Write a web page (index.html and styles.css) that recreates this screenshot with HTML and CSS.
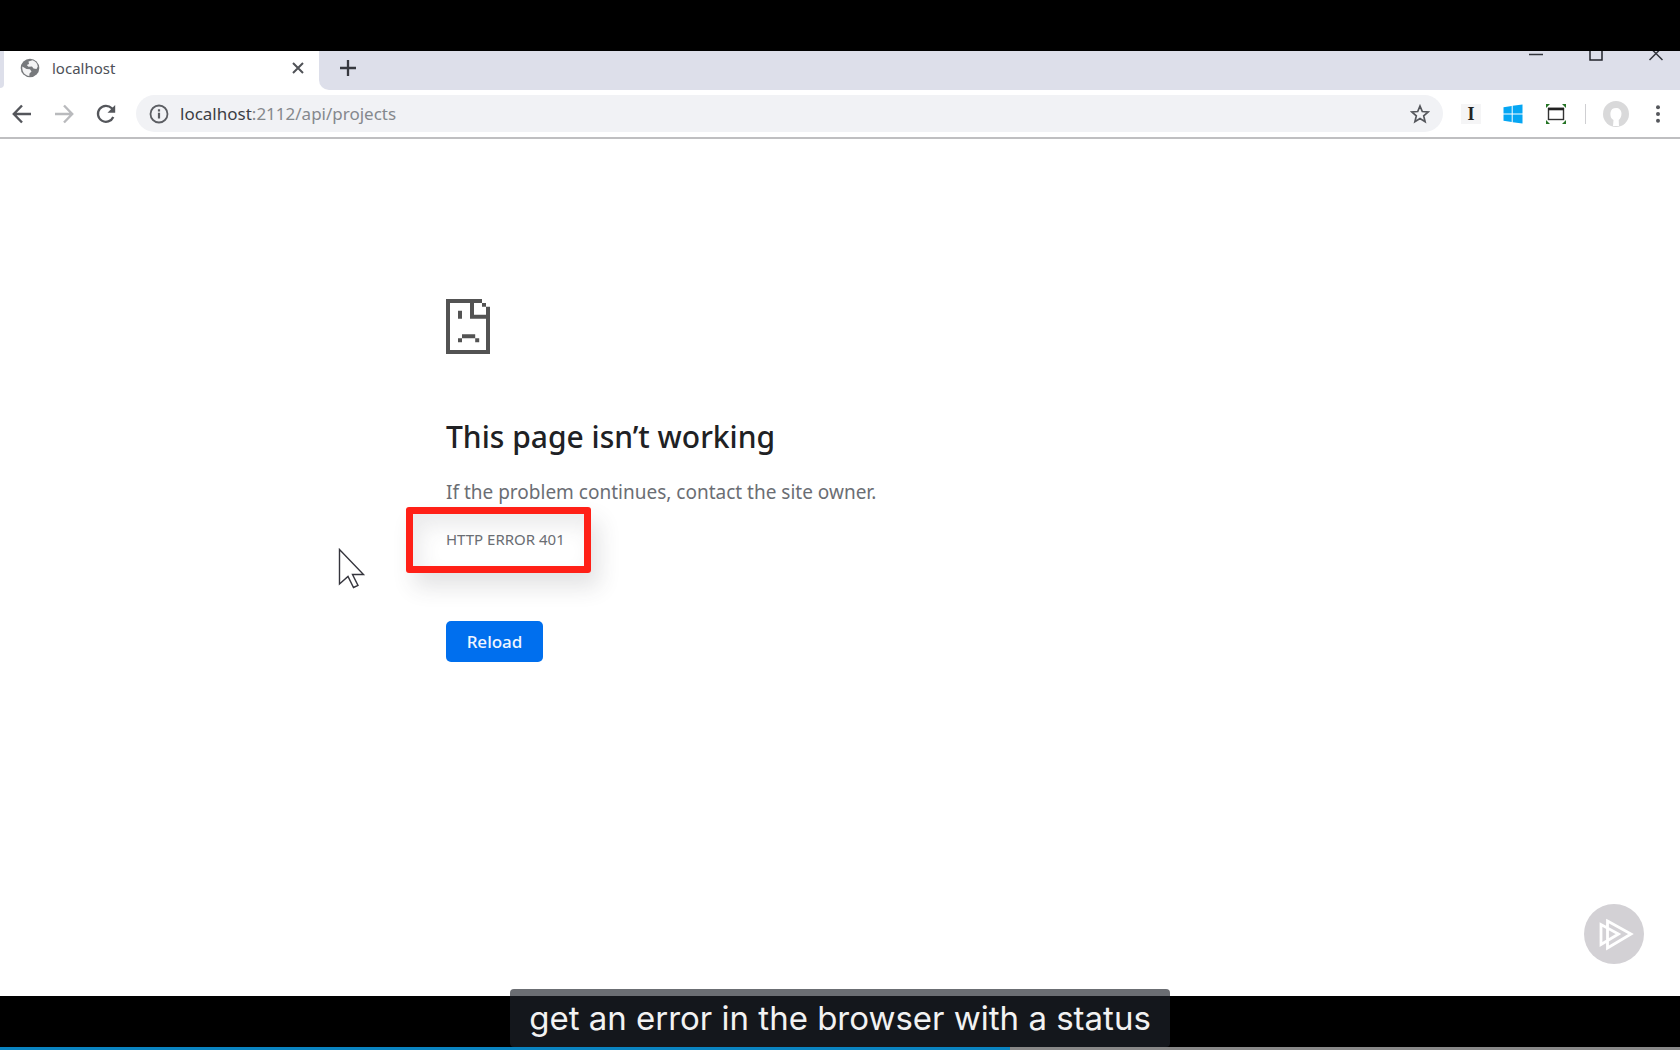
FILE: index.html
```html
<!DOCTYPE html>
<html lang="en">
<head>
<meta charset="utf-8">
<title>localhost</title>
<link rel="stylesheet" href="styles.css">
</head>
<body>
<div class="player">
  <div class="browser">
    <header class="tabstrip">
      <div class="tab-previous"></div>
      <div class="tab">
        <svg class="globe" viewBox="0 0 20 20" width="20" height="20" aria-hidden="true">
          <circle cx="10" cy="10" r="9.3" fill="#77797c"/>
          <path d="M2.300 8.500 6.500 11 10 11.300 11.500 13.500 9.500 15.500 9.300 18C5 17.500 1.800 14 2.300 8.500ZM8.500 3.500 12.500 2.300C15.500 3.300 17.300 5.500 17.800 8.500L16.500 11 13.500 10.500 12 8.500 8.500 8.800 6.800 7 9 6Z" fill="#f4f4f5"/>
        </svg>
        <span class="tab-title">localhost</span>
        <button class="icon-button" type="button" aria-label="Close tab">
          <svg viewBox="0 0 12 12" width="12" height="12"><path d="M1 1 11 11M11 1 1 11" stroke="#505257" stroke-width="2"/></svg>
        </button>
      </div>
      <button class="icon-button new-tab" type="button" aria-label="New tab">
        <svg viewBox="0 0 16 16" width="16" height="16"><path d="M8 0V16M0 8H16" stroke="#36383f" stroke-width="2.300"/></svg>
      </button>
      <div class="window-controls">
        <button class="icon-button" type="button" aria-label="Minimize"><svg viewBox="0 0 14 14" width="14" height="14"><path d="M0 7.500H14" stroke="#33353c" stroke-width="1.500"/></svg></button>
        <button class="icon-button" type="button" aria-label="Maximize"><svg viewBox="0 0 14 14" width="14" height="14"><path d="M1 0H13V13H1Z" fill="none" stroke="#22242b" stroke-width="1.500"/></svg></button>
        <button class="icon-button" type="button" aria-label="Close"><svg viewBox="0 0 14 14" width="14" height="14"><path d="M.5 0 13.500 13M13.500 0 .5 13" stroke="#33353c" stroke-width="1.500"/></svg></button>
      </div>
    </header>
    <nav class="toolbar">
      <div class="nav-buttons">
        <button class="icon-button" type="button" aria-label="Back"><svg viewBox="0 0 20 20" width="20" height="20"><path d="M19 10H3M10 1.500 1.800 10 10 18.500" fill="none" stroke="#54565b" stroke-width="2.400"/></svg></button>
        <button class="icon-button" type="button" aria-label="Forward"><svg viewBox="0 0 20 20" width="20" height="20"><path d="M1 10H17M10 1.500 18.200 10 10 18.500" fill="none" stroke="#b9babd" stroke-width="2.400"/></svg></button>
        <button class="icon-button" type="button" aria-label="Reload page"><svg viewBox="0 0 20 20" width="20" height="20"><path d="M17.300 13A8 8 0 1 1 15.800 4.300L17 5.600" fill="none" stroke="#54565b" stroke-width="2.300"/><path d="M19.200 1V8.800H11.500Z" fill="#54565b"/></svg></button>
      </div>
      <div class="address">
        <svg viewBox="0 0 20 20" width="20" height="20" aria-hidden="true"><circle cx="10" cy="10" r="8.500" fill="none" stroke="#5c5e63" stroke-width="1.800"/><path d="M10 8.800V14.500M10 5.300V7.400" stroke="#5c5e63" stroke-width="2.200"/></svg>
        <span class="url"><span class="host">localhost</span>:2112/api/projects</span>
        <button class="icon-button" type="button" aria-label="Bookmark this page"><svg viewBox="0 0 20 20" width="20" height="20"><path d="M10 2 12.300 7.500 18.200 8 13.700 11.900 15.100 17.700 10 14.600 4.900 17.700 6.300 11.900 1.800 8 7.700 7.500Z" fill="none" stroke="#55575c" stroke-width="1.700"/></svg></button>
      </div>
      <div class="extensions">
        <button class="icon-button" type="button" aria-label="Instapaper"><span class="instapaper">I</span></button>
        <button class="icon-button" type="button" aria-label="Windows extension"><svg viewBox="0 0 20 20" width="20" height="20"><path d="M.5 3.200 8.700 2V9.500H.5ZM9.700 1.800 19.500.4V9.500H9.700ZM.5 10.500H8.700V18L.5 16.800ZM9.700 10.500H19.500V19.600L9.700 18.200Z" fill="#05a6f3"/></svg></button>
        <button class="icon-button" type="button" aria-label="Full page capture"><svg viewBox="0 0 22 20" width="22" height="20"><rect x="3.500" y="4.500" width="15" height="11" fill="#fff" stroke="#333" stroke-width="1.400"/><path d="M3 5H19" stroke="#222" stroke-width="2.600"/><path d="M1 0H5L1 4ZM17 0H21V4ZM1 16V20H5ZM21 16V20H17Z" fill="#247324"/></svg></button>
        <span class="divider"></span>
        <button class="icon-button profile" type="button" aria-label="Profile"><svg viewBox="0 0 26 26" width="26" height="26"><circle cx="13" cy="13" r="13" fill="#d9d9da"/><path d="M10 25 10.500 19C7.500 17.500 7.200 14 7.500 11.500C8 8.300 10 7 13 7S18.500 9 18.500 12.500C18.500 15.800 17.200 18 15.700 19L16 25Z" fill="#fff"/></svg></button>
        <button class="icon-button" type="button" aria-label="Menu"><svg viewBox="0 0 4 18" width="4" height="18"><g fill="#55575c"><circle cx="2" cy="2.200" r="2"/><circle cx="2" cy="9" r="2"/><circle cx="2" cy="15.800" r="2"/></g></svg></button>
      </div>
    </nav>
    <main class="page">
      <div class="error">
        <svg class="sad-file" viewBox="0 0 11 14" width="44" height="55" preserveAspectRatio="none" aria-hidden="true"><path d="M0 0H9V1H7V4H10V2H11V14H0ZM1 1V13H10V5H6V1ZM9 1H10V2H9ZM3 3H4V5H3ZM4 9H7.300V10H4ZM3 10H4V11H3ZM7.300 10H8.300V11H7.300Z" fill="#535353" fill-rule="evenodd"/></svg>
        <h1>This page isn’t working</h1>
        <p class="advice">If the problem continues, contact the site owner.</p>
        <p class="code">HTTP ERROR 401<span class="highlight"></span></p>
        <button class="reload" type="button">Reload</button>
      </div>
      <svg class="cursor" viewBox="0 0 28 42" width="28" height="42" aria-hidden="true"><path d="M1.500 1.500V36L10 28.500 15.500 39.500 20 37.500 14.500 26.500H25.500Z" fill="#fff" stroke="#35353d" stroke-width="1.400"/></svg>
      <svg class="watermark" viewBox="0 0 60 60" width="60" height="60" aria-hidden="true"><circle cx="30" cy="30" r="30" fill="#d3d1d5"/><path d="M23.500 17 47 30 23.500 44ZM17 20.500V40.500L34.500 30Z" fill="none" stroke="#fff" stroke-width="2.800"/></svg>
    </main>
  </div>
  <p class="caption">get an error in the browser with a status</p>
  <div class="progress"><div class="played" style="width:60.120%"></div></div>
</div>
</body>
</html>
```
FILE: styles.css
```css
* { box-sizing: border-box; }
body {
  margin: 0;
  background: #000;
  font-family: "Noto Sans", "Open Sans", sans-serif;
}
h1, p { margin: 0; }
svg { display: block; flex: none; }
.player {
  position: relative;
  display: flex;
  flex-direction: column;
  min-height: 100vh;
  padding: 51px 0 54px;
}
.browser {
  flex: 1;
  display: flex;
  flex-direction: column;
  background: #fff;
}
.icon-button {
  display: flex;
  align-items: center;
  justify-content: center;
  padding: 0;
  border: 0;
  background: none;
}
/* White behind the tabs lets the rounded corners of the strip show */
.tabstrip {
  display: flex;
  height: 39px;
  background: linear-gradient(90deg, #fff 340px, #dddfea 340px);
}
.tab-previous {
  width: 4px;
  height: 37px;
  background: #dddfea;
  border-bottom-right-radius: 8px;
}
.tab {
  display: flex;
  align-items: center;
  width: 315px;
  padding: 0 15px 5px 16px;
  gap: 12px;
  background: #fff;
}
.tab-title {
  flex: 1;
  font-size: 15px;
  line-height: 20px;
  color: #4d5058;
}
.new-tab {
  width: 57px;
  padding-bottom: 5px;
  background: #dddfea;
  border-bottom-left-radius: 10px;
}
.window-controls {
  display: flex;
  align-items: flex-start;
  gap: 46px;
  margin-left: auto;
  padding-right: 17px;
  height: 10px;
  overflow: hidden;
}
.window-controls svg { margin-top: -4px; }
.toolbar {
  display: flex;
  align-items: center;
  height: 49px;
  padding: 0 20px 0 12px;
  border-bottom: 2px solid #bfbfc1;
}
.nav-buttons {
  display: flex;
  gap: 22px;
  padding-right: 20px;
}
.address {
  flex: 1;
  display: flex;
  align-items: center;
  height: 37px;
  padding: 0 13px;
  gap: 11px;
  border-radius: 19px;
  background: #f1f2f5;
}
.url {
  flex: 1;
  font-size: 17px;
  line-height: 24px;
  color: #85888d;
}
.host { color: #3c3e44; }
.extensions {
  display: flex;
  align-items: center;
  gap: 22px;
  padding-left: 18px;
}
.instapaper {
  width: 20px;
  background: #f5f5f6;
  font: bold 18px/20px "Liberation Serif", serif;
  color: #222;
}
.divider {
  width: 1px;
  height: 20px;
  background: #cfcfd2;
  margin: 0 -5px 0 -4px;
}
.profile { margin-right: 5px; }
.page {
  position: relative;
  flex: 1;
}
.error {
  width: 50%;
  margin-left: 446px;
  padding-top: 160px;
}
.sad-file { margin-bottom: 63px; }
h1 {
  font-size: 30px;
  font-weight: 500;
  line-height: 40px;
  color: #202124;
}
.advice {
  margin-top: 23px;
  font-size: 19px;
  line-height: 24px;
  color: #6b6e74;
}
.code {
  position: relative;
  width: fit-content;
  margin-top: 23px;
  font-size: 15px;
  line-height: 24px;
  color: #6b6e74;
}
.highlight {
  position: absolute;
  inset: -20px -26px -22px -40px;
  border: 7px solid #ff2017;
  border-radius: 3px;
  box-shadow: 8px 14px 22px rgba(60, 60, 65, .14), inset 8px 12px 20px rgba(60, 60, 65, .1);
}
.reload {
  width: 97px;
  height: 41px;
  margin-top: 70px;
  border: 0;
  border-radius: 5px;
  background: #006fee;
  font: 500 17px/24px "Noto Sans", sans-serif;
  color: #f0f6ff;
}
.cursor {
  position: absolute;
  left: 338px;
  top: 409px;
}
.watermark {
  position: absolute;
  right: 36px;
  bottom: 32px;
}
.caption {
  position: absolute;
  bottom: 3px;
  left: 50%;
  width: 660px;
  height: 58px;
  margin-left: -330px;
  border-radius: 4px;
  background: rgba(30, 35, 42, .66);
  font-family: Inter, sans-serif;
  font-size: 33px;
  line-height: 58px;
  text-align: center;
  white-space: nowrap;
  color: #f2f2f2;
}
.progress {
  position: absolute;
  bottom: 0;
  left: 0;
  right: 0;
  height: 3px;
  background: #888;
}
.played {
  height: 3px;
  background: #0a84c1;
}
```
